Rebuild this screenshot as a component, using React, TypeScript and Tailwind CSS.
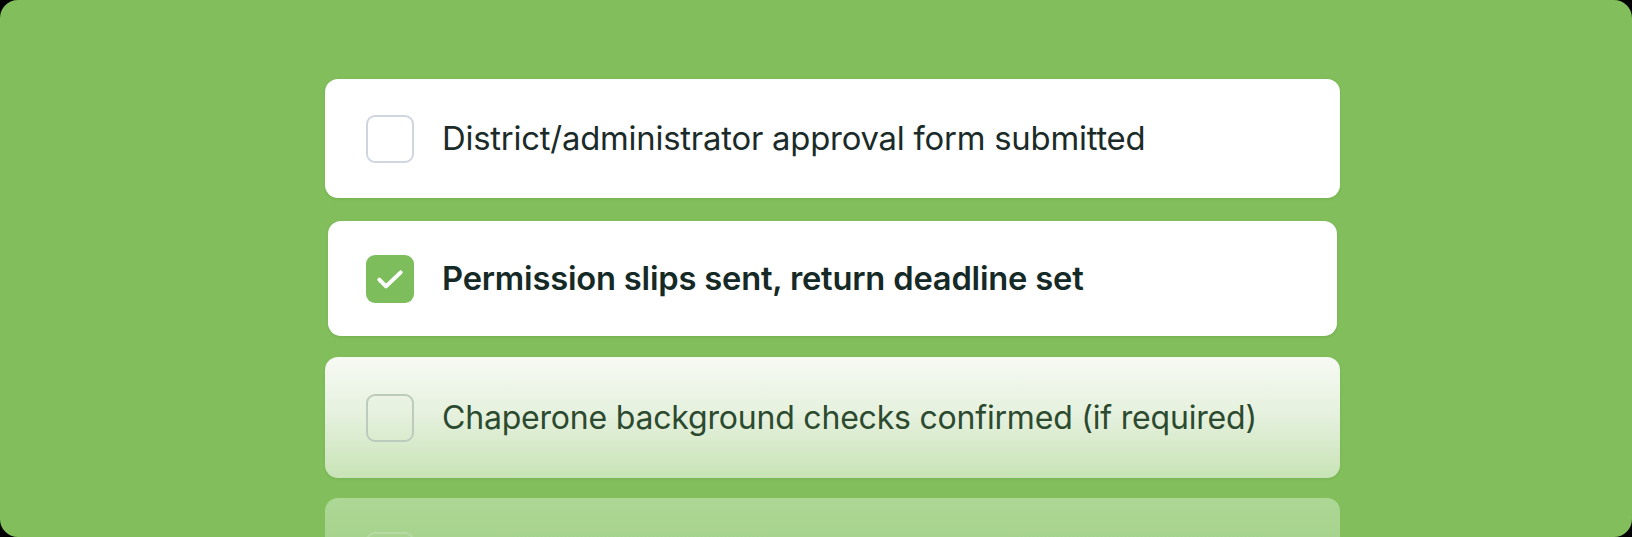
import React from 'react';

type Item = {
  label: string;
  done?: boolean;
  tone: 'solid' | 'fade' | 'ghost';
};

const items: Item[] = [
  { label: 'District/administrator approval form submitted', tone: 'solid' },
  { label: 'Permission slips sent, return deadline set', done: true, tone: 'solid' },
  { label: 'Chaperone background checks confirmed (if required)', tone: 'fade' },
  { label: 'Emergency contacts collected for every student', tone: 'ghost' },
];

const CheckBox = ({ done, tone }: { done?: boolean; tone: Item['tone'] }) => {
  if (done) {
    return (
      <div className="w-12 h-12 shrink-0 rounded-[9px] bg-[#7dbd5b] flex items-center justify-center">
        <svg width="32" height="32" viewBox="0 0 24 24" fill="none">
          <path d="M4 12.5l5 5L20 7" stroke="white" strokeWidth="3" strokeLinecap="round" strokeLinejoin="round" />
        </svg>
      </div>
    );
  }
  const border =
    tone === 'solid' ? 'border-[#cfd6df]' : tone === 'fade' ? 'border-[#bccbbd]' : 'border-[#b8d9a6]';
  return <div className={`w-12 h-12 shrink-0 rounded-[9px] border-2 ${border}`} />;
};

const Row = ({ item, className }: { item: Item; className: string }) => {
  const text =
    item.tone === 'fade'
      ? 'text-[32px] text-[#2c4a2f] font-normal'
      : item.done
      ? 'text-[32.7px] text-[#152a26] font-semibold'
      : 'text-[32.8px] text-[#1a2b29] font-normal';

  return (
    <div className={`shrink-0 flex items-center gap-[28px] rounded-[13px] ${className}`}>
      <CheckBox done={item.done} tone={item.tone} />
      {item.tone !== 'ghost' && (
        <span className={`tracking-[-0.2px] whitespace-nowrap ${text}`}>{item.label}</span>
      )}
    </div>
  );
};

export default function App() {
  return (
    <div className="w-[1632px] h-[537px] bg-black overflow-hidden" style={{ fontFamily: 'Inter, "Noto Sans", sans-serif' }}>
      <div className="w-full h-full rounded-[18px] bg-[#82bf5c] flex pl-[325px] overflow-hidden">
        <div className="w-[1015px] pt-[79px] flex flex-col">
          <Row item={items[0]} className="h-[119px] pl-[41px] bg-white shadow-[0_1px_3px_rgba(40,80,20,0.15)]" />
          <Row item={items[1]} className="h-[115px] mt-[23px] mx-[3px] pl-[38px] bg-white shadow-[0_1px_3px_rgba(40,80,20,0.15)]" />
          <Row
            item={items[2]}
            className="h-[121px] mt-[21px] pl-[41px] bg-gradient-to-b from-[#f7faf4] via-[#e4f0dc] to-[#c8e3b6] shadow-[0_1px_3px_rgba(40,80,20,0.12)]"
          />
          <Row
            item={items[3]}
            className="h-[121px] mt-[20px] pl-[41px] items-start pt-[34px] bg-gradient-to-b from-[#acd795] to-[#9acb7e]"
          />
        </div>
      </div>
    </div>
  );
}
